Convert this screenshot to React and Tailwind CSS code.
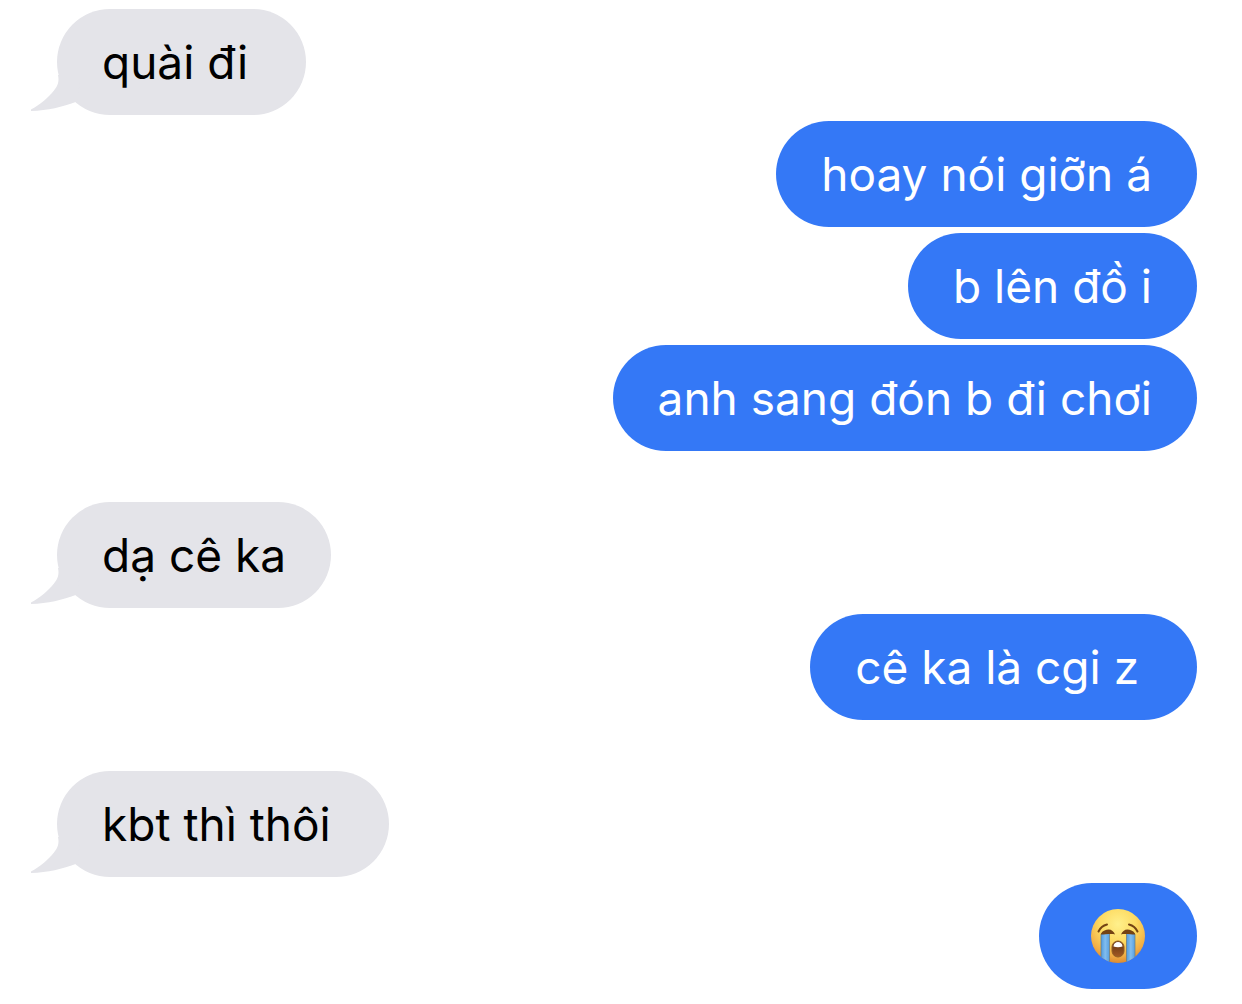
import React from "react"
import clsx from "clsx"

// A trailing space is part of the message, the same way the keyboard left it
const messages = [
  { id: 1, sent: false, text: "quài đi " },
  { id: 2, sent: true, text: "hoay nói giỡn á" },
  { id: 3, sent: true, text: "b lên đồ i" },
  { id: 4, sent: true, text: "anh sang đón b đi chơi" },
  { id: 5, sent: false, text: "dạ cê ka" },
  { id: 6, sent: true, text: "cê ka là cgi z " },
  { id: 7, sent: false, text: "kbt thì thôi " },
  { id: 8, sent: true, emoji: true },
]

function Tail() {
  return (
    <svg
      aria-hidden="true"
      viewBox="0 0 52 40"
      className="absolute -left-7 bottom-0 h-10 w-[52px] fill-[#e4e4e9]"
    >
      <path d="M29 0C30.500 7 28.500 11 25 15.500C19 23 12 29 2 34.500V36C19 35.500 33 32 48 26.500L52 0Z" />
    </svg>
  )
}

function CryingEmoji() {
  return (
    <svg role="img" aria-label="Loudly crying face" viewBox="0 0 56 56" className="mx-1.5 size-14">
      <defs>
        <radialGradient id="face" cx="0.5" cy="0.28" r="0.74">
          <stop offset="0" stopColor="#fff08c" />
          <stop offset="0.45" stopColor="#fddb62" />
          <stop offset="0.8" stopColor="#f1ad45" />
          <stop offset="1" stopColor="#d9852e" />
        </radialGradient>
        <linearGradient id="tear" x1="0" y1="0" x2="1" y2="0">
          <stop offset="0" stopColor="#4f9ade" />
          <stop offset="0.5" stopColor="#83bdee" />
          <stop offset="1" stopColor="#559fe0" />
        </linearGradient>
        <linearGradient id="mouth" x1="0" y1="0" x2="0" y2="1">
          <stop offset="0" stopColor="#5f3110" />
          <stop offset="1" stopColor="#a35a24" />
        </linearGradient>
        <clipPath id="head">
          <circle cx="28" cy="28" r="27" />
        </clipPath>
      </defs>
      <circle cx="28" cy="28" r="27" fill="url(#face)" />
      <g clipPath="url(#head)">
        <path d="M11 26H19.500V56H11Z" fill="url(#tear)" />
        <path d="M36.500 26H45V56H36.500Z" fill="url(#tear)" />
        <path d="M11 26V50M19.500 26V56M36.500 26V56M45 26V50" stroke="#6c7c82" strokeWidth="1" opacity="0.75" />
      </g>
      <path d="M8.500 23.500Q11 18 17 16.500M47.500 23.500Q45 18 39 16.500" fill="none" stroke="#744313" strokeWidth="2" strokeLinecap="round" />
      <path
        d="M11 25.500C13 22.500 16 21.500 18.500 21.500C21.500 21.500 24 23.500 25 26.500C22 25.500 15 26.500 11 26.500ZM45 25.500C43 22.500 40 21.500 37.500 21.500C34.500 21.500 32 23.500 31 26.500C34 25.500 41 26.500 45 26.500Z"
        fill="#744313"
      />
      <rect x="22" y="33" width="12" height="16" rx="6" fill="url(#mouth)" stroke="#925e23" strokeWidth="1" />
      <path d="M23.500 38.500C23.500 35.500 25.500 34 28 34S32.500 35.500 32.500 38.500Q28 40 23.500 38.500Z" fill="#fff" />
    </svg>
  )
}

function Bubble({ message }) {
  return (
    <div
      className={clsx(
        "relative flex h-[106px] items-center rounded-full px-[45px]",
        message.sent ? "bg-[#3478f6] text-white" : "bg-[#e4e4e9] text-black"
      )}
    >
      {!message.sent && <Tail />}
      {message.emoji ? <CryingEmoji /> : <p className="relative whitespace-pre">{message.text}</p>}
    </div>
  )
}

function App() {
  return (
    <main className="min-h-screen bg-white pt-[9px] pr-[45px] pb-[15px] pl-[57px] font-['Inter',sans-serif] text-[46px] leading-[60px]">
      <ul className="flex flex-col gap-1.5">
        {messages.map((message, index) => (
          <li
            key={message.id}
            className={clsx(
              "flex",
              message.sent ? "justify-end" : "justify-start",
              !message.sent && index > 0 && "mt-[45px]"
            )}
          >
            <Bubble message={message} />
          </li>
        ))}
      </ul>
    </main>
  )
}

export default App
